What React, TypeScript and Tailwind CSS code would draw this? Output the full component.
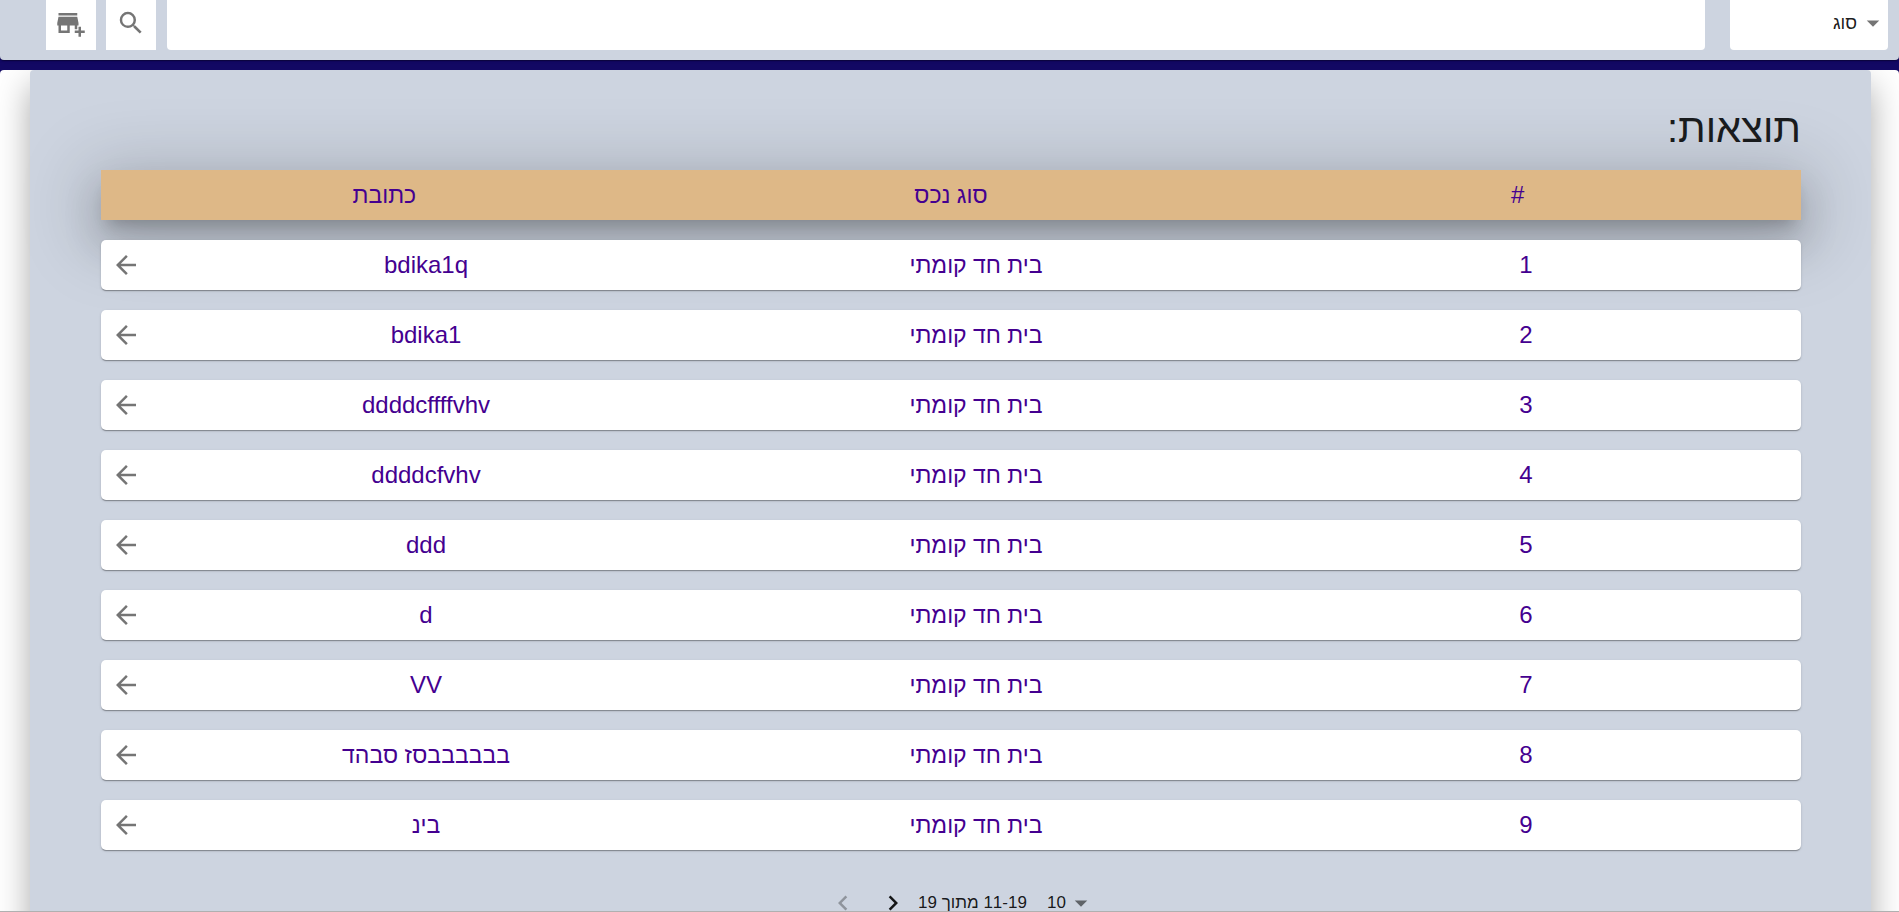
import { MdAddBusiness, MdArrowBack, MdArrowDropDown, MdChevronLeft, MdChevronRight, MdSearch } from 'react-icons/md';

const PROPERTY_TYPE = 'בית חד קומתי';

const results = [
  'bdika1q',
  'bdika1',
  'ddddcffffvhv',
  'ddddcfvhv',
  'ddd',
  'd',
  'VV',
  'בבבבבבסז סבהד',
  'בינ',
].map((address, index) => ({ id: index + 1, type: PROPERTY_TYPE, address }));

const cardShadow =
  'shadow-[0_2px_1px_-1px_rgba(0,0,0,0.2),0_1px_1px_0_rgba(0,0,0,0.14),0_1px_3px_0_rgba(0,0,0,0.12)]';

const isHebrew = (text: string) => /[\u0590-\u05ff]/.test(text);

function SearchBar() {
  return (
    <header
      className={`flex h-[60px] shrink-0 items-start gap-[10px] rounded-b bg-[#cdd4e0] pr-[11px] pl-[46px] ${cardShadow}`}
    >
      <label className="relative ml-[15px] h-[50px] w-[158px] shrink-0">
        <select
          aria-label="סוג"
          className="h-full w-full appearance-none rounded-b bg-white pr-[31px] pb-1 text-lg text-black/90 outline-none"
        >
          <option>סוג</option>
        </select>
        <MdArrowDropDown className="pointer-events-none absolute top-2 right-0 size-[30px] text-[#757575]" />
      </label>
      <input
        type="text"
        aria-label="חיפוש"
        className="ml-px h-[50px] min-w-0 flex-1 rounded-b bg-white px-3 text-base outline-none"
      />
      <button
        type="button"
        aria-label="חיפוש"
        className="flex h-[50px] w-[50px] items-center justify-center bg-white pb-1 text-[#757575]"
      >
        <MdSearch className="size-[30px]" />
      </button>
      <button
        type="button"
        aria-label="הוספת נכס"
        className="flex h-[50px] w-[50px] items-center justify-center bg-white pb-1 text-[#757575]"
      >
        <MdAddBusiness className="size-[30px]" />
      </button>
    </header>
  );
}

function ResultsTable() {
  return (
    <table className="mt-[18px] flex flex-col gap-5 text-center text-2xl text-[#440090]">
      <thead className="block">
        <tr className="flex h-[50px] items-center bg-[#deb887] shadow-[0_11px_15px_-7px_rgba(0,0,0,0.2),0_24px_38px_3px_rgba(0,0,0,0.12),0_11px_70px_14px_rgba(0,0,0,0.18)]">
          <th className="flex-1 font-normal">#</th>
          <th className="flex-1 text-[23px] font-normal">סוג נכס</th>
          <th className="flex-1 text-[23px] font-normal">כתובת</th>
        </tr>
      </thead>
      <tbody className="flex flex-col gap-5">
        {results.map((row) => (
          <tr key={row.id} className={`relative flex h-[50px] items-center rounded-[5px] bg-white ${cardShadow}`}>
            <td className="flex-1">{row.id}</td>
            <td className="flex-1 text-[23px]">{row.type}</td>
            <td className={isHebrew(row.address) ? 'flex-1 text-[23px]' : 'flex-1'}>{row.address}</td>
            <td className="flex w-[50px] justify-center">
              <button type="button" aria-label="פרטים" className="text-[#757575]">
                <MdArrowBack className="size-[30px]" />
              </button>
            </td>
          </tr>
        ))}
      </tbody>
    </table>
  );
}

function Pagination() {
  return (
    <nav className="mt-[38px] flex h-[30px] items-center justify-center pl-[22px] text-[17px] text-black/90">
      <label className="relative h-[30px]">
        <select
          aria-label="שורות בעמוד"
          className="h-[30px] appearance-none bg-transparent pr-[30px] pl-5 outline-none"
        >
          <option>10</option>
        </select>
        <MdArrowDropDown className="pointer-events-none absolute top-0 right-0 size-[30px] text-[#5f6368]" />
      </label>
      <span>11-19 מתוך 19</span>
      <button type="button" aria-label="הקודם" className="mr-[10px]">
        <MdChevronRight className="size-[30px]" />
      </button>
      <button type="button" aria-label="הבא" disabled className="mr-5 text-black/30">
        <MdChevronLeft className="size-[30px]" />
      </button>
    </nav>
  );
}

export default function App() {
  return (
    <div
      dir="rtl"
      className="flex h-screen flex-col gap-[10px] overflow-hidden border-b border-[#b0b0b0] bg-[#120863] font-['Liberation_Sans',Arial,sans-serif]"
    >
      <SearchBar />
      <div className="flex-1 overflow-hidden rounded-t bg-white pr-7 pl-[30px]">
        <main className="min-h-[1000px] rounded-t bg-[#cdd4e0] pt-[34px] pr-[70px] pl-[71px] shadow-[0_15px_34px_rgba(0,0,0,0.34)]">
          <h1 className="text-[40px] leading-[48px] text-[#1a1c1e]">תוצאות:</h1>
          <ResultsTable />
          <Pagination />
        </main>
      </div>
    </div>
  );
}
